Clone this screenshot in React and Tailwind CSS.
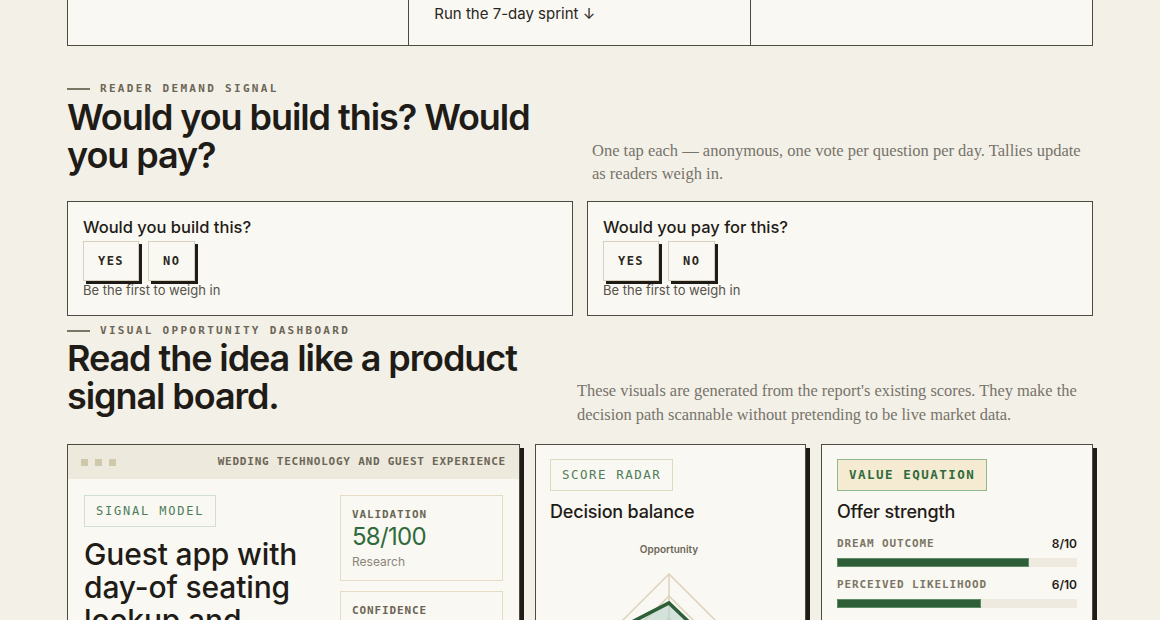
import React from 'react';

const sans = 'font-["Inter","Noto_Sans",sans-serif]';
const mono = 'font-["DejaVu_Sans_Mono","Liberation_Mono",monospace]';
const serif = 'font-["Liberation_Serif","DejaVu_Serif",serif]';

function Eyebrow({ children }) {
  return (
    <div className="flex items-center gap-[10px] h-4">
      <span className="block w-[23px] h-[2px] bg-[#7a7565]" />
      <span className={`${mono} text-[11px] font-bold tracking-[0.21em] text-[#6b6656] leading-4`}>{children}</span>
    </div>
  );
}

function VoteCard({ question }) {
  return (
    <div className="border border-[#4d4a42] bg-[#faf8f3] px-[15px] pt-[13px] pb-4">
      <h3 className="text-[16.5px] font-medium leading-6 text-[#1f1c17]">{question}</h3>
      <div className="mt-[2px] flex gap-[9px]">
        {['YES', 'NO'].map((v) => (
          <button
            key={v}
            className={`${mono} h-10 px-[14px] border border-[#d8d1bf] bg-[#faf8f3] text-[12px] font-bold tracking-[0.12em] text-[#2a2720] shadow-[3px_3px_0_#1f1c17]`}
          >
            {v}
          </button>
        ))}
      </div>
      <p className="text-[13px] leading-[18px] text-[#55514a]">Be the first to weigh in</p>
    </div>
  );
}

function StatBox({ label, value, note }) {
  return (
    <div className="border border-[#e6dcc6] px-[11px] pt-[11px] pb-[9px]">
      <div className={`${mono} text-[11px] font-bold tracking-[0.08em] leading-4 text-[#6b6656]`}>{label}</div>
      {value && <div className="text-[24px] leading-7 text-[#2f6b3c] tracking-[-0.03em]">{value}</div>}
      {note && <div className="mt-[2px] text-[12px] leading-[18px] text-[#8a857a]">{note}</div>}
    </div>
  );
}

function Bar({ label, score, first }) {
  return (
    <div className={first ? 'mt-[12px]' : 'mt-[10px]'}>
      <div className="flex items-center justify-between h-4">
        <span className={`${mono} text-[11px] font-bold tracking-[0.08em] text-[#7a7565]`}>{label}</span>
        <span className="text-[12px] font-semibold text-[#1f1c17]">{score}/10</span>
      </div>
      <div className="mt-[6px] h-[9px] bg-[#eeeadf]">
        <div className="h-full bg-[#2e5e37] border border-[#5f8a66]" style={{ width: `${score * 10}%` }} />
      </div>
    </div>
  );
}

function Radar() {
  const cx = 119;
  const cy = 122;
  const rings = [88, 66, 44, 22];
  const diamond = (r) => `${cx},${cy - r} ${cx + r},${cy} ${cx},${cy + r} ${cx - r},${cy}`;
  const data = '119,63 165,107 148,161 90,161 49,99';
  return (
    <svg width="239" height="220" viewBox="0 0 239 220" className="block">
      <text x={cx} y="12.5" textAnchor="middle" fontSize="10" fontWeight="600" fill="#6b6656" fontFamily="Inter, sans-serif">
        Opportunity
      </text>
      {rings.map((r) => (
        <polygon key={r} points={diamond(r)} fill="none" stroke="#ddd2bb" strokeWidth="1.5" />
      ))}
      <line x1={cx} y1={cy - 88} x2={cx} y2={cy + 88} stroke="#ddd2bb" strokeWidth="1.5" />
      <line x1={cx - 88} y1={cy} x2={cx + 88} y2={cy} stroke="#ddd2bb" strokeWidth="1.5" />
      <polygon points={data} fill="#b9d3cb" fillOpacity="0.6" stroke="#2e5e37" strokeWidth="3.5" strokeLinejoin="miter" />
    </svg>
  );
}

export default function App() {
  return (
    <div className={`min-h-screen bg-[#f3f0e8] ${sans} text-[#1f1c17]`}>
      <div className="mx-auto w-[1026px]">
        {/* top strip */}
        <div className="grid grid-cols-3 border-x border-b border-[#4d4a42] bg-[#faf8f3]">
          <div className="border-r border-[#4d4a42]" />
          <div className="border-r border-[#4d4a42] pl-[25px] pt-[4px] pb-[21px] text-[15px] leading-5 text-[#2a2720]">
            Run the 7-day sprint ↓
          </div>
          <div />
        </div>

        {/* reader demand */}
        <section className="mt-[35px]">
          <div className="grid grid-cols-[501px_1fr] gap-6 items-end">
            <div className="pb-[11px]">
              <Eyebrow>READER DEMAND SIGNAL</Eyebrow>
              <h2 className="mt-px text-[36px] leading-[38px] font-semibold tracking-[-0.03em]">
                Would you build this? Would you pay?
              </h2>
            </div>
            <p className={`${serif} text-[16.5px] leading-[23px] text-[#77736a]`}>
              One tap each — anonymous, one vote per question per day. Tallies update as readers weigh in.
            </p>
          </div>
          <div className="mt-4 grid grid-cols-2 gap-[14px]">
            <VoteCard question="Would you build this?" />
            <VoteCard question="Would you pay for this?" />
          </div>
        </section>

        {/* dashboard */}
        <section className="mt-[7px]">
          <div className="grid grid-cols-[486px_1fr] gap-6 items-end">
            <div>
              <Eyebrow>VISUAL OPPORTUNITY DASHBOARD</Eyebrow>
              <h2 className="text-[36px] leading-[38px] font-semibold tracking-[-0.03em]">
                Read the idea like a product signal board.
              </h2>
            </div>
            <p className={`${serif} text-[16.4px] leading-[24px] text-[#77736a] -mb-3`}>
              These visuals are generated from the report's existing scores. They make the decision path scannable
              without pretending to be live market data.
            </p>
          </div>

          <div className="mt-[29px] grid grid-cols-[453px_271px_1fr] gap-[15px]">
            {/* card 1 */}
            <div className="h-[260px] overflow-hidden border border-[#4d4a42] bg-[#faf8f3] shadow-[4px_4px_0_#1f1c17]">
              <div className="h-[34px] bg-[#ede9dd] px-[13px] flex items-center justify-between">
                <div className="flex gap-[7px]">
                  <span className="w-[7px] h-[7px] bg-[#d0c8aa]" />
                  <span className="w-[7px] h-[7px] bg-[#d0c8aa]" />
                  <span className="w-[7px] h-[7px] bg-[#d0c8aa]" />
                </div>
                <span className={`${mono} text-[11px] font-bold tracking-[0.07em] text-[#6b6656]`}>
                  WEDDING TECHNOLOGY AND GUEST EXPERIENCE
                </span>
              </div>
              <div className="px-4 pt-4 grid grid-cols-[1fr_163px] gap-6">
                <div>
                  <span className={`${mono} inline-block border border-[#cfe0d2] px-[11px] h-8 leading-[30px] text-[12px] tracking-[0.15em] text-[#4d7d58]`}>
                    SIGNAL MODEL
                  </span>
                  <h3 className="mt-[11px] text-[30px] leading-[33px] font-medium tracking-[-0.005em]">
                    Guest app with day-of seating lookup and table finder
                  </h3>
                </div>
                <div className="flex flex-col gap-[10px]">
                  <StatBox label="VALIDATION" value="58/100" note="Research" />
                  <StatBox label="CONFIDENCE" value="Medium" note="Signals" />
                </div>
              </div>
            </div>

            {/* card 2 */}
            <div className="h-[260px] overflow-hidden border border-[#4d4a42] bg-[#faf8f3] shadow-[4px_4px_0_#1f1c17] px-[14px] pt-[14px]">
              <span className={`${mono} inline-block border border-[#d5dfc0] px-[11px] h-8 leading-[30px] text-[12.5px] tracking-[0.12em] text-[#4f7d57]`}>
                SCORE RADAR
              </span>
              <h3 className="mt-[9px] text-[18px] leading-6 font-medium tracking-[-0.01em]">Decision balance</h3>
              <div className="mt-4">
                <Radar />
              </div>
            </div>

            {/* card 3 */}
            <div className="h-[260px] overflow-hidden border border-[#4d4a42] bg-[#faf8f3] shadow-[4px_4px_0_#1f1c17] px-[15px] pt-[14px]">
              <span className={`${mono} inline-block border border-[#8fb890] bg-[#f5ead2] px-[11px] h-8 leading-[30px] text-[12.5px] font-bold tracking-[0.12em] text-[#2f6b3c]`}>
                VALUE EQUATION
              </span>
              <h3 className="mt-[9px] text-[18px] leading-6 font-medium tracking-[-0.01em]">Offer strength</h3>
              <Bar label="DREAM OUTCOME" score={8} first />
              <Bar label="PERCEIVED LIKELIHOOD" score={6} />
            </div>
          </div>
        </section>
      </div>
    </div>
  );
}
